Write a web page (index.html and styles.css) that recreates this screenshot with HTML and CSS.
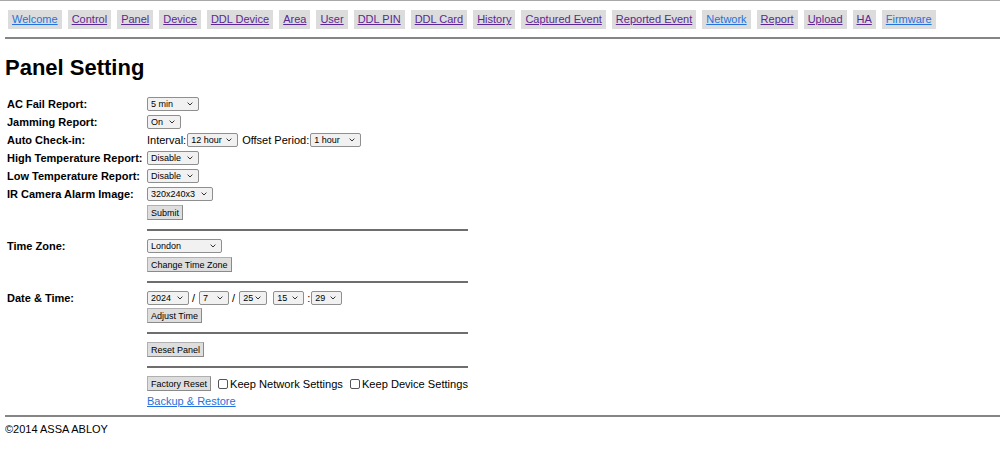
FILE: index.html
```html
<!DOCTYPE html>
<html>
<head>
<meta charset="utf-8">
<title>Panel Setting</title>
<link rel="stylesheet" href="styles.css">
</head>
<body>
<nav class="menu">
  <a class="item link" href="#">Welcome</a>
  <a class="item visited" href="#">Control</a>
  <a class="item visited" href="#">Panel</a>
  <a class="item visited" href="#">Device</a>
  <a class="item visited" href="#">DDL Device</a>
  <a class="item visited" href="#">Area</a>
  <a class="item visited" href="#">User</a>
  <a class="item visited" href="#">DDL PIN</a>
  <a class="item visited" href="#">DDL Card</a>
  <a class="item visited" href="#">History</a>
  <a class="item visited" href="#">Captured Event</a>
  <a class="item visited" href="#">Reported Event</a>
  <a class="item link" href="#">Network</a>
  <a class="item visited" href="#">Report</a>
  <a class="item visited" href="#">Upload</a>
  <a class="item visited" href="#">HA</a>
  <a class="item link" href="#">Firmware</a>
</nav>
<hr class="rule">
<h1 class="title">Panel Setting</h1>
<div class="form">
  <div class="label">AC Fail Report:</div>
  <div class="cell"><select class="sel w52"><option>5 min</option></select></div>

  <div class="label">Jamming Report:</div>
  <div class="cell"><select class="sel w34"><option>On</option></select></div>

  <div class="label">Auto Check-in:</div>
  <div class="cell">Interval:<select class="sel w51 ml1"><option>12 hour</option></select><span class="txt">Offset Period:</span><select class="sel w51 ml1"><option>1 hour</option></select></div>

  <div class="label">High Temperature Report:</div>
  <div class="cell"><select class="sel w52"><option>Disable</option></select></div>

  <div class="label">Low Temperature Report:</div>
  <div class="cell"><select class="sel w52"><option>Disable</option></select></div>

  <div class="label">IR Camera Alarm Image:</div>
  <div class="cell"><select class="sel w66"><option>320x240x3</option></select></div>

  <div class="label"></div>
  <div class="cell"><button class="btn">Submit</button></div>

  <div class="label"></div>
  <div class="rowline"><hr class="sep"></div>

  <div class="label">Time Zone:</div>
  <div class="stack gap4">
    <div class="cell"><select class="sel w75"><option>London</option></select></div>
    <div class="cell"><button class="btn">Change Time Zone</button></div>
  </div>

  <div class="label"></div>
  <div class="rowline"><hr class="sep"></div>

  <div class="label">Date &amp; Time:</div>
  <div class="stack">
    <div class="cell">
      <select class="sel w42"><option>2024</option></select><span class="slash">/</span><select class="sel w30"><option>7</option></select><span class="slash">/</span><select class="sel w28"><option>25</option></select><span class="sp"></span><select class="sel w31"><option>15</option></select><span class="colon">:</span><select class="sel w31"><option>29</option></select>
    </div>
    <div class="cell"><button class="btn">Adjust Time</button></div>
  </div>

  <div class="label"></div>
  <div class="rowline"><hr class="sep"></div>

  <div class="label"></div>
  <div class="cell"><button class="btn">Reset Panel</button></div>

  <div class="label"></div>
  <div class="rowline"><hr class="sep last"></div>

  <div class="label"></div>
  <div class="stack">
    <div class="cell">
      <button class="btn">Factory Reset</button>
      <label class="chk"><input type="checkbox" class="box">Keep Network Settings</label>
      <label class="chk"><input type="checkbox" class="box">Keep Device Settings</label>
    </div>
    <div class="cell"><a class="backup" href="#">Backup &amp; Restore</a></div>
  </div>
</div>
<hr class="rule foot-rule">
<div class="footer">©2014 ASSA ABLOY</div>
</body>
</html>
```

FILE: styles.css
```css
html {
  border-top: 1px solid #a8a8a8;
}
body {
  margin: 0 0 0 5px;
  font-family: "Liberation Sans", Arial, sans-serif;
  font-size: 11px;
  color: #000;
  background: #fff;
}
.menu {
  display: flex;
  flex-wrap: wrap;
  gap: 6px;
  padding: 9px 0 0 3px;
}
.item {
  display: block;
  background: #dcdcdc;
  padding: 3px 4px;
  line-height: 13px;
  font-size: 11px;
}
.link { color: #2472dc; }
.visited { color: #5b2796; }
.rule {
  border: 0;
  border-top: 2px solid #858585;
  height: 0;
  margin: 8px 0 0 0;
}
.title {
  font-size: 22px;
  font-weight: bold;
  line-height: 25px;
  margin: 16px 0 0 0;
}
.form {
  display: grid;
  grid-template-columns: 140px 321px;
  row-gap: 4px;
  margin: 17px 0 0 2px;
}
.label {
  font-weight: bold;
  line-height: 14px;
  white-space: nowrap;
}
.cell {
  display: flex;
  align-items: center;
  min-height: 14px;
  line-height: 14px;
  white-space: nowrap;
}
.stack {
  display: flex;
  flex-direction: column;
  gap: 3px;
}
.stack.gap4 { gap: 4px; }
.rowline {
  display: block;
}
.sel {
  appearance: none;
  -webkit-appearance: none;
  font-family: "Liberation Sans", Arial, sans-serif;
  font-size: 9px;
  height: 14px;
  line-height: 12px;
  padding: 0 0 0 3px;
  margin: 0;
  border: 1px solid #8f8f8f;
  border-radius: 2px;
  background-color: #f1f1f1;
  background-image: url("data:image/svg+xml;utf8,<svg xmlns='http://www.w3.org/2000/svg' width='6' height='4' viewBox='0 0 6 4'><path d='M0.6 0.6 L3 3 L5.4 0.6' fill='none' stroke='%23333' stroke-width='1'/></svg>");
  background-repeat: no-repeat;
  background-position: right 5px center;
  background-size: 6px 4px;
  color: #000;
  box-sizing: border-box;
}
.w28 { width: 28px; }
.w30 { width: 30px; }
.w31 { width: 31px; }
.w34 { width: 34px; }
.w42 { width: 42px; }
.w51 { width: 51px; }
.w52 { width: 52px; }
.w66 { width: 66px; }
.w75 { width: 75px; }
.ml1 { margin-left: 1px; }
.txt { margin-left: 4px; }
.slash { margin: 0 4px 0 3px; }
.sp { width: 6px; }
.colon { margin: 0 1px 0 3px; }
.btn {
  font-family: "Liberation Sans", Arial, sans-serif;
  font-size: 9px;
  height: 15px;
  line-height: 12px;
  padding: 0 3px;
  margin: 0;
  border: 1px solid #b0b0b0;
  border-right-color: #8a8a8a;
  border-bottom-color: #8a8a8a;
  background: #dedede;
  color: #000;
  border-radius: 0;
}
.sep {
  border: 0;
  border-top: 2px solid #6e6e6e;
  height: 0;
  margin: 5px 0 4px 0;
}
.sep.last { margin-bottom: 4px; }
.chk {
  display: inline-flex;
  align-items: center;
  margin-left: 7px;
  font-size: 11.1px;
}
.box {
  appearance: none;
  -webkit-appearance: none;
  width: 10px;
  height: 10px;
  margin: 0 2px 0 0;
  border: 1px solid #555;
  border-radius: 2px;
  background: #fff;
}
.backup {
  color: #2472dc;
  font-size: 11px;
}
.foot-rule {
  margin-top: 7px;
}
.footer {
  margin-top: 5px;
  font-size: 11px;
  line-height: 14px;
}
```
